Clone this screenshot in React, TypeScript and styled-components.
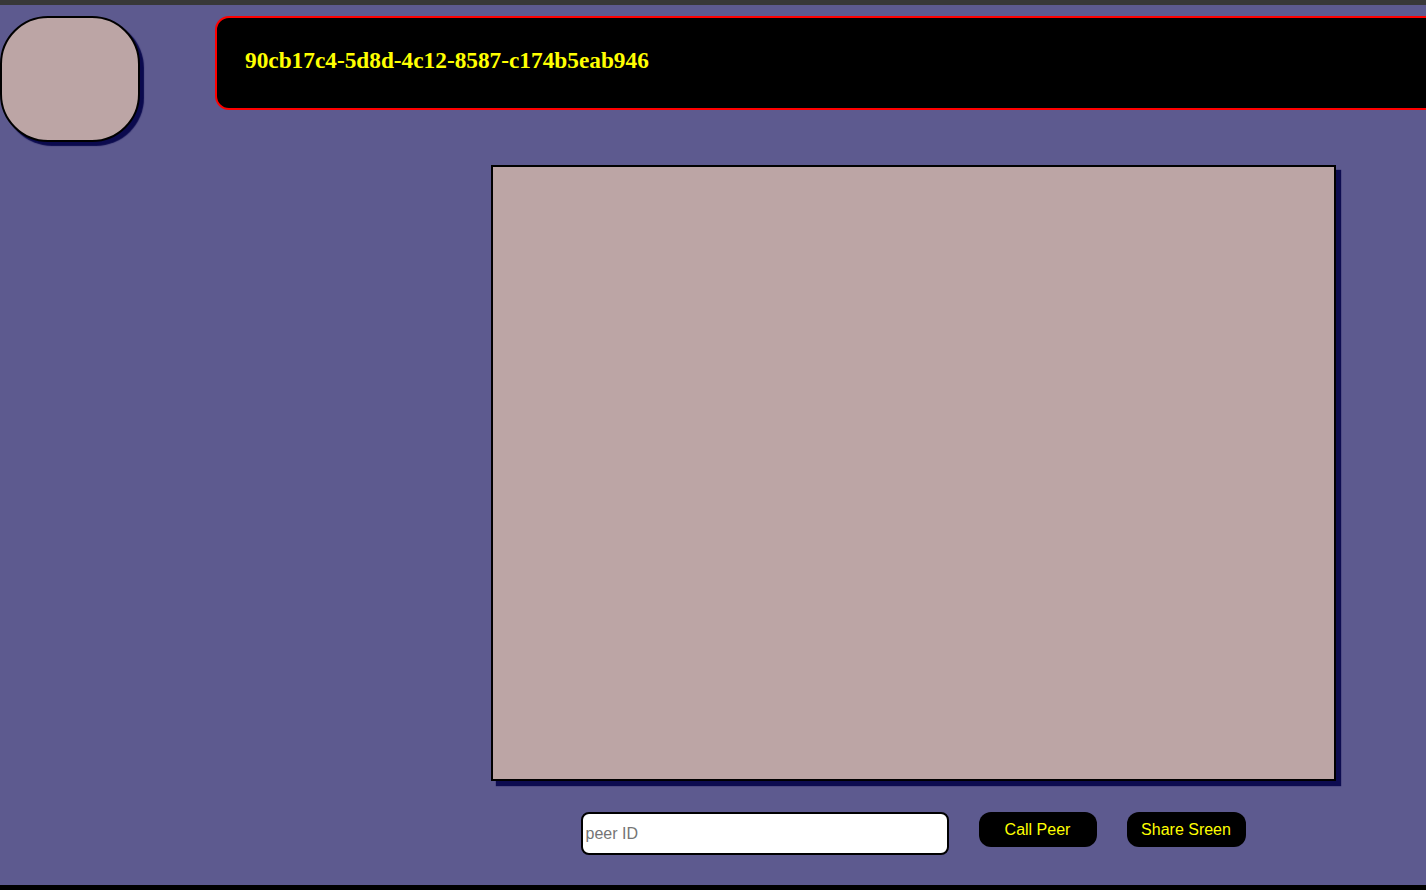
import React from "react";
import styled, { createGlobalStyle } from "styled-components";

const Global = createGlobalStyle`
  html, body { margin: 0; padding: 0; overflow: hidden; background: #000; }
  * { box-sizing: border-box; }
`;

const Page = styled.div`
  width: 1426px;
  height: 890px;
  background: #5d5a8f;
  border-top: 5px solid #383838;
  border-bottom: 5px solid #000;
  overflow: hidden;
  display: flex;
  flex-direction: column;
`;

const TopRow = styled.div`
  display: flex;
  align-items: flex-start;
  padding-top: 11px;
  gap: 75px;
`;

const Avatar = styled.div`
  flex: 0 0 140px;
  height: 126px;
  background: #bca5a5;
  border: 2px solid #000;
  border-radius: 48px;
  box-shadow: 4px 4px 1px #0b0a4e;
`;

const IdBar = styled.div`
  flex: 0 0 1260px;
  height: 94px;
  background: #000;
  border: 2px solid #f00;
  border-radius: 14px;
  display: flex;
  align-items: center;
  padding: 0 0 6px 28px;
`;

const IdText = styled.h2`
  margin: 0;
  font-family: "Liberation Serif", "Times New Roman", serif;
  font-weight: bold;
  font-size: 23.3px;
  color: #ffff00;
`;

const Main = styled.div`
  display: grid;
  grid-template-columns: 400px 1fr;
  padding-top: 23px;
`;

const Stage = styled.div`
  grid-column: 2;
  display: flex;
  flex-direction: column;
  align-items: center;
  gap: 31px;
`;

const Video = styled.div`
  width: 845px;
  height: 616px;
  background: #bca5a5;
  border: 2px solid #000;
  box-shadow: 5px 5px 1px #0d0c50;
`;

const Controls = styled.div`
  display: flex;
  align-items: flex-start;
  gap: 30px;
`;

const PeerInput = styled.input`
  width: 368px;
  height: 43px;
  border: 2px solid #000;
  border-radius: 8px;
  background: #fff;
  padding: 0 3px;
  font-family: "Liberation Sans", Arial, sans-serif;
  font-size: 16px;
  outline: none;
  &::placeholder { color: #757575; }
`;

const ActionButton = styled.button<{ $w: number }>`
  width: ${(p) => p.$w}px;
  height: 35px;
  background: #000;
  color: #ffff00;
  border: none;
  border-radius: 12px;
  font-family: "Liberation Sans", Arial, sans-serif;
  font-size: 16px;
  padding: 0;
  cursor: pointer;
`;

export default function App() {
  return (
    <>
      <Global />
      <Page>
        <TopRow>
          <Avatar />
          <IdBar>
            <IdText>90cb17c4-5d8d-4c12-8587-c174b5eab946</IdText>
          </IdBar>
        </TopRow>
        <Main>
          <Stage>
            <Video />
            <Controls>
              <PeerInput placeholder="peer ID" />
              <ActionButton $w={118}>Call Peer</ActionButton>
              <ActionButton $w={119}>Share Sreen</ActionButton>
            </Controls>
          </Stage>
        </Main>
      </Page>
    </>
  );
}
